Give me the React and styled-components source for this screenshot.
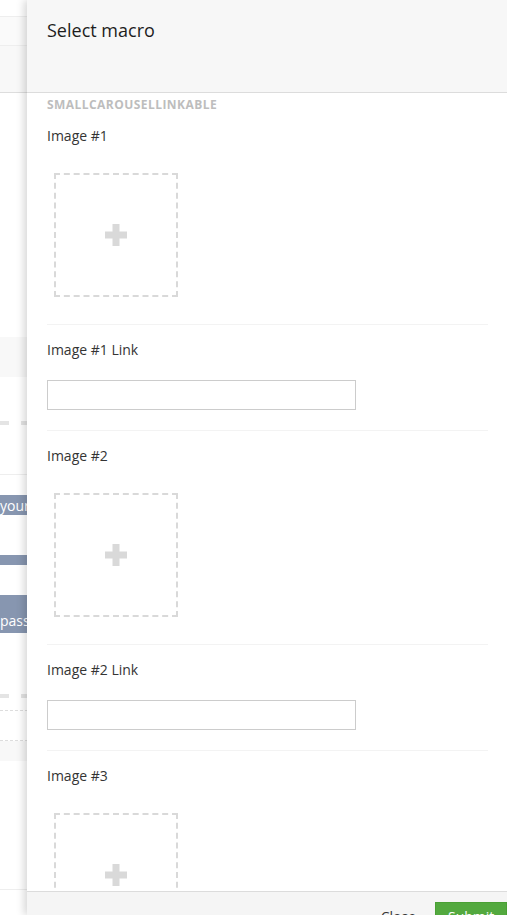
import React from 'react';
import styled, { createGlobalStyle } from 'styled-components';

const Global = createGlobalStyle`
  html, body { margin: 0; padding: 0; height: 100%; overflow: hidden; background: #fff; }
  body { font-family: "Open Sans", "Liberation Sans", sans-serif; color: #333; }
  #root { height: 100%; }
  * { box-sizing: border-box; }
`;

const Page = styled.div`
  position: relative;
  width: 100%;
  height: 915px;
  overflow: hidden;
`;

/* ---------- background page (mostly hidden behind the panel) ---------- */
const Backdrop = styled.div`
  display: flex;
  flex-direction: column;
  width: 100%;
`;

const Band = styled.div`
  flex-shrink: 0;
  height: ${(p) => p.$h}px;
  background: ${(p) => p.$bg || '#fff'};
  border-bottom: ${(p) => (p.$line ? `1px solid ${p.$line}` : 'none')};
  color: #fff;
  font-size: 14px;
  white-space: nowrap;
  display: flex;
  align-items: ${(p) => p.$align || 'center'};
  padding-bottom: ${(p) => p.$pb || 0}px;
  overflow: hidden;
`;

const Dashes = styled.div`
  flex-shrink: 0;
  height: 4px;
  background: repeating-linear-gradient(90deg, #e4e4e4 0 9px, transparent 9px 21px);
`;

const DashedBox = styled.div`
  flex-shrink: 0;
  height: ${(p) => p.$h}px;
  border-top: 1px dashed #ddd;
  border-bottom: 1px dashed #ddd;
  background: #fff;
`;

/* ---------- overlay panel ---------- */
const Panel = styled.aside`
  position: absolute;
  top: 0;
  left: 27px;
  width: 500px;
  height: 100%;
  background: #fff;
  box-shadow: -3px 0 8px rgba(0, 0, 0, 0.16);
  display: flex;
  flex-direction: column;
`;

const Header = styled.header`
  flex-shrink: 0;
  height: 93px;
  background: #f7f7f7;
  border-bottom: 1px solid #dcdcdc;
  padding: 18px 20px 0;
`;

const Title = styled.h1`
  margin: 0;
  font-size: 18px;
  line-height: 24px;
  font-weight: 400;
  color: #1d1d1d;
`;

const Body = styled.div`
  flex: 1;
  min-height: 0;
  overflow: hidden;
  padding: 0 39px 0 20px;
`;

const MacroName = styled.h5`
  margin: 0;
  padding-top: 5px;
  height: 18px;
  font-size: 12px;
  line-height: 13px;
  font-weight: 700;
  letter-spacing: 0.45px;
  text-transform: uppercase;
  color: #bdbdbd;
`;

const Property = styled.div`
  padding: 15px 0 20px;
  border-bottom: 1px solid #f3f3f3;
`;

const Label = styled.label`
  display: block;
  font-size: 14px;
  line-height: 20px;
  color: #343434;
  margin-bottom: 20px;
`;

const PickerWrap = styled.div`
  padding: 7px;
`;

const Picker = styled.button`
  width: 124px;
  height: 124px;
  border: 2px dashed #d9d9d9;
  background: #fff;
  padding: 0;
  display: flex;
  align-items: center;
  justify-content: center;
  cursor: pointer;
`;

const TextInput = styled.input`
  display: block;
  width: 309px;
  height: 30px;
  border: 1px solid #cccccc;
  background: #fff;
  padding: 4px 6px;
  font: inherit;
  font-size: 13px;
  outline: none;
`;

const Footer = styled.footer`
  flex-shrink: 0;
  height: 24px;
  border-top: 1px solid #dcdcdc;
  background: #f5f5f5;
  padding: 10px 20px 0;
  display: flex;
  justify-content: flex-end;
  align-items: flex-start;
  gap: 6px;
  overflow: hidden;
`;

const LinkButton = styled.button`
  border: 1px solid transparent;
  background: transparent;
  font-family: inherit;
  font-size: 14px;
  line-height: 20px;
  padding: 4px 12px;
  color: #343434;
`;

const SubmitButton = styled.button`
  border: 1px solid #4aa035;
  background: #53a93f;
  color: #fff;
  font-family: inherit;
  font-size: 14px;
  line-height: 20px;
  padding: 4px 12px;
  width: 72px;
  text-align: left;
`;

const PlusIcon = () => (
  <svg width="22" height="22" viewBox="0 0 22 22" aria-hidden="true">
    <rect x="7.5" y="0" width="7" height="22" fill="#d9d9d9" />
    <rect x="0" y="7.5" width="22" height="7" fill="#d9d9d9" />
  </svg>
);

const ImageProperty = ({ label }) => (
  <Property>
    <Label>{label}</Label>
    <PickerWrap>
      <Picker type="button" aria-label="Add image">
        <PlusIcon />
      </Picker>
    </PickerWrap>
  </Property>
);

const LinkProperty = ({ label }) => (
  <Property>
    <Label>{label}</Label>
    <TextInput type="text" />
  </Property>
);

export default function App() {
  return (
    <>
      <Global />
      <Page>
        <Backdrop>
          <Band $h={17} $line="#eeeeee" />
          <Band $h={29} $bg="#fafafa" $line="#eeeeee" />
          <Band $h={47} $bg="#f8f8f8" $line="#dddddd" />
          <Band $h={244} />
          <Band $h={40} $bg="#f8f8f8" />
          <Band $h={44} />
          <Dashes />
          <Band $h={50} $line="#eeeeee" />
          <Band $h={20} />
          <Band $h={20} $bg="#8796b0">your email</Band>
          <Band $h={40} />
          <Band $h={10} $bg="#8796b0" />
          <Band $h={30} />
          <Band $h={38} $bg="#8796b0" $align="flex-end" $pb={3}>password</Band>
          <Band $h={61} />
          <Dashes />
          <Band $h={12} />
          <DashedBox $h={31} />
          <Band $h={20} $bg="#f8f8f8" />
          <Band $h={129} $line="#eeeeee" />
        </Backdrop>

        <Panel>
          <Header>
            <Title>Select macro</Title>
          </Header>
          <Body>
            <MacroName>smallCarouselLinkable</MacroName>
            <ImageProperty label="Image #1" />
            <LinkProperty label="Image #1 Link" />
            <ImageProperty label="Image #2" />
            <LinkProperty label="Image #2 Link" />
            <ImageProperty label="Image #3" />
          </Body>
          <Footer>
            <LinkButton type="button">Close</LinkButton>
            <SubmitButton type="button">Submit</SubmitButton>
          </Footer>
        </Panel>
      </Page>
    </>
  );
}
